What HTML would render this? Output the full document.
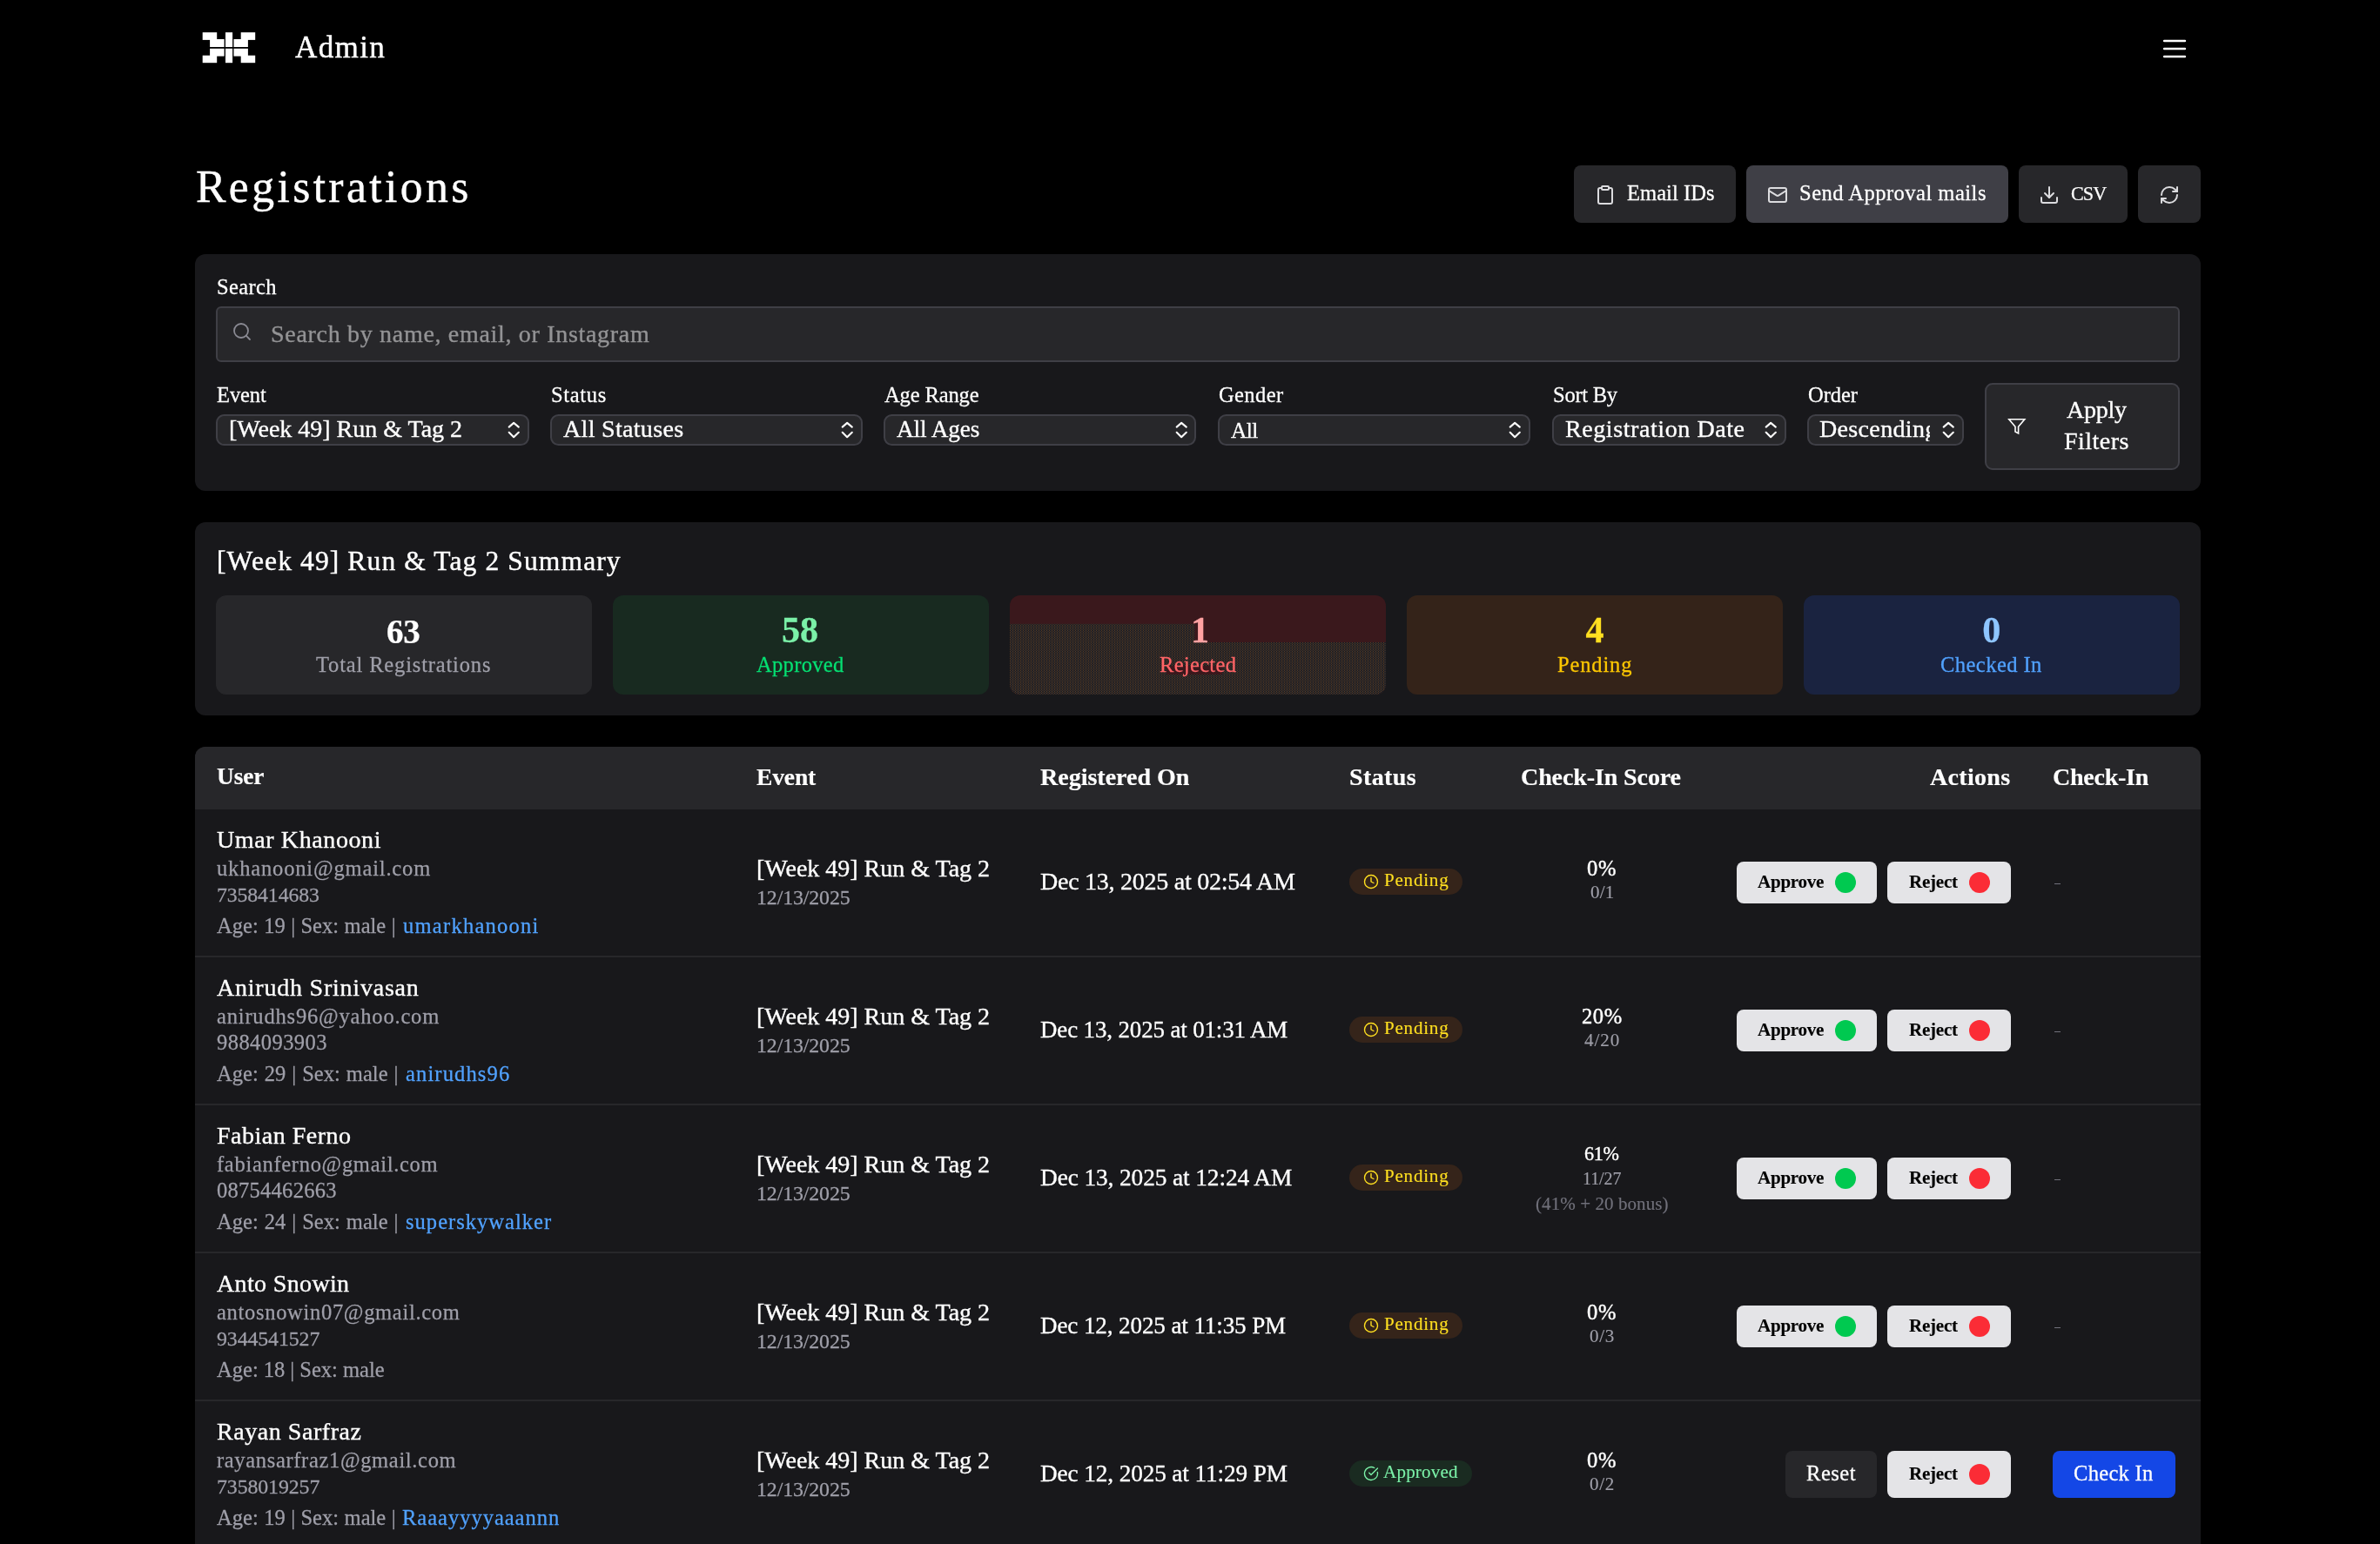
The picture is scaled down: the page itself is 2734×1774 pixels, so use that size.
<!DOCTYPE html>
<html lang="en"><head><meta charset="utf-8"><title>Admin - Registrations</title>
<style>
html,body{margin:0;padding:0;background:#000;}
html{width:2734px;height:1774px;overflow:hidden;}
body{width:2734px;height:1774px;position:relative;overflow:hidden;font-family:"Liberation Serif",serif;color:#fff;}
.b{position:absolute;display:block}
.t{position:absolute;white-space:nowrap;line-height:1;display:block;will-change:transform}
</style></head><body>

<svg class="b" style="left:0;top:0" width="320" height="100" viewBox="0 0 320 100" fill="#fff"><rect x="232.7" y="37.2" width="16.50" height="8.70"/><rect x="241.1" y="45.0" width="16.50" height="9.00"/><rect x="259.0" y="37.2" width="8.10" height="16.80"/><rect x="268.5" y="45.0" width="16.40" height="9.00"/><rect x="276.7" y="37.2" width="16.50" height="8.70"/><rect x="241.1" y="55.8" width="16.50" height="8.80"/><rect x="232.7" y="63.7" width="16.50" height="8.50"/><rect x="259.0" y="55.8" width="8.10" height="16.40"/><rect x="268.5" y="55.8" width="16.40" height="8.80"/><rect x="276.7" y="63.7" width="16.50" height="8.50"/></svg>
<svg class="b" style="left:2470.00px;top:30.00px" width="60" height="50" viewBox="0 0 60 50" fill="none" stroke="#fff" stroke-width="2.6" stroke-linecap="round" stroke-linejoin="round" ><path d="M16.2 17H39.9M16.2 26H39.9M16.2 35H39.9"/></svg>
<div class="b" style="left:1808.00px;top:190.00px;width:186.00px;height:66.00px;background:#27272a;border-radius:8px;"></div>
<div class="b" style="left:2006.00px;top:190.00px;width:301.00px;height:66.00px;background:#3f3f46;border-radius:8px;"></div>
<div class="b" style="left:2319.00px;top:190.00px;width:125.00px;height:66.00px;background:#27272a;border-radius:8px;"></div>
<div class="b" style="left:2456.00px;top:190.00px;width:72.00px;height:66.00px;background:#27272a;border-radius:8px;"></div>
<svg class="b" style="left:1832.00px;top:212.00px" width="24" height="24" viewBox="0 0 24 24" fill="none" stroke="#dcdcdf" stroke-width="2" stroke-linecap="round" stroke-linejoin="round" ><rect x="8" y="2" width="8" height="4" rx="1" ry="1"/><path d="M16 4h2a2 2 0 0 1 2 2v14a2 2 0 0 1-2 2H6a2 2 0 0 1-2-2V6a2 2 0 0 1 2-2h2"/></svg>
<svg class="b" style="left:2030.00px;top:212.00px" width="24" height="24" viewBox="0 0 24 24" fill="none" stroke="#dcdcdf" stroke-width="2" stroke-linecap="round" stroke-linejoin="round" ><rect width="20" height="16" x="2" y="4" rx="2"/><path d="m22 7-8.97 5.7a1.94 1.94 0 0 1-2.06 0L2 7"/></svg>
<svg class="b" style="left:2342.00px;top:212.00px" width="24" height="24" viewBox="0 0 24 24" fill="none" stroke="#dcdcdf" stroke-width="2" stroke-linecap="round" stroke-linejoin="round" ><path d="M21 15v4a2 2 0 0 1-2 2H5a2 2 0 0 1-2-2v-4"/><polyline points="7 10 12 15 17 10"/><line x1="12" x2="12" y1="15" y2="3"/></svg>
<svg class="b" style="left:2480.00px;top:212.00px" width="24" height="24" viewBox="0 0 24 24" fill="none" stroke="#dcdcdf" stroke-width="2" stroke-linecap="round" stroke-linejoin="round" ><path d="M3 12a9 9 0 0 1 9-9 9.75 9.75 0 0 1 6.74 2.74L21 8"/><path d="M21 3v5h-5"/><path d="M21 12a9 9 0 0 1-9 9 9.75 9.75 0 0 1-6.74-2.74L3 16"/><path d="M8 16H3v5"/></svg>
<div class="b" style="left:224.00px;top:292.00px;width:2304.00px;height:272.00px;background:#18181b;border-radius:12px;"></div>
<div class="b" style="left:248.00px;top:352.00px;width:2256.00px;height:64.00px;background:#27272a;border-radius:6px;border:2px solid #3f3f46;box-sizing:border-box;"></div>
<svg class="b" style="left:266.00px;top:368.50px" width="24" height="24" viewBox="0 0 24 24" fill="none" stroke="#8a8a93" stroke-width="1.8" stroke-linecap="round" stroke-linejoin="round" ><circle cx="11" cy="11" r="8"/><path d="m21 21-4.3-4.3"/></svg>
<div class="b" style="left:248.00px;top:476.00px;width:359.70px;height:36.00px;background:#27272a;border-radius:9.5px;border:2px solid #3f3f46;box-sizing:border-box;"></div>
<svg class="b" style="left:580.10px;top:480.00px" width="20" height="28" viewBox="0 0 20 28" fill="none" stroke="#fff" stroke-width="2.1" stroke-linecap="round" stroke-linejoin="round" ><path d="M4.7 10.6 L10.15 5.9 L15.8 10.6M4.7 16.8 L10.15 22.2 L15.8 16.8"/></svg>
<div class="b" style="left:631.70px;top:476.00px;width:359.10px;height:36.00px;background:#27272a;border-radius:9.5px;border:2px solid #3f3f46;box-sizing:border-box;"></div>
<svg class="b" style="left:963.20px;top:480.00px" width="20" height="28" viewBox="0 0 20 28" fill="none" stroke="#fff" stroke-width="2.1" stroke-linecap="round" stroke-linejoin="round" ><path d="M4.7 10.6 L10.15 5.9 L15.8 10.6M4.7 16.8 L10.15 22.2 L15.8 16.8"/></svg>
<div class="b" style="left:1015.00px;top:476.00px;width:359.40px;height:36.00px;background:#27272a;border-radius:9.5px;border:2px solid #3f3f46;box-sizing:border-box;"></div>
<svg class="b" style="left:1346.80px;top:480.00px" width="20" height="28" viewBox="0 0 20 28" fill="none" stroke="#fff" stroke-width="2.1" stroke-linecap="round" stroke-linejoin="round" ><path d="M4.7 10.6 L10.15 5.9 L15.8 10.6M4.7 16.8 L10.15 22.2 L15.8 16.8"/></svg>
<div class="b" style="left:1398.80px;top:476.00px;width:358.80px;height:36.00px;background:#27272a;border-radius:9.5px;border:2px solid #3f3f46;box-sizing:border-box;"></div>
<svg class="b" style="left:1730.00px;top:480.00px" width="20" height="28" viewBox="0 0 20 28" fill="none" stroke="#fff" stroke-width="2.1" stroke-linecap="round" stroke-linejoin="round" ><path d="M4.7 10.6 L10.15 5.9 L15.8 10.6M4.7 16.8 L10.15 22.2 L15.8 16.8"/></svg>
<div class="b" style="left:1782.60px;top:476.00px;width:269.00px;height:36.00px;background:#27272a;border-radius:9.5px;border:2px solid #3f3f46;box-sizing:border-box;"></div>
<svg class="b" style="left:2024.00px;top:480.00px" width="20" height="28" viewBox="0 0 20 28" fill="none" stroke="#fff" stroke-width="2.1" stroke-linecap="round" stroke-linejoin="round" ><path d="M4.7 10.6 L10.15 5.9 L15.8 10.6M4.7 16.8 L10.15 22.2 L15.8 16.8"/></svg>
<div class="b" style="left:2076.00px;top:476.00px;width:180.00px;height:36.00px;background:#27272a;border-radius:9.5px;border:2px solid #3f3f46;box-sizing:border-box;"></div>
<svg class="b" style="left:2228.40px;top:480.00px" width="20" height="28" viewBox="0 0 20 28" fill="none" stroke="#fff" stroke-width="2.1" stroke-linecap="round" stroke-linejoin="round" ><path d="M4.7 10.6 L10.15 5.9 L15.8 10.6M4.7 16.8 L10.15 22.2 L15.8 16.8"/></svg>
<div class="b" style="left:2280.00px;top:440.00px;width:224.00px;height:100.00px;background:#27272a;border-radius:9px;border:2px solid #3f3f46;box-sizing:border-box;"></div>
<svg class="b" style="left:2306.20px;top:479.20px" width="21.6" height="21.6" viewBox="0 0 24 24" fill="none" stroke="#fff" stroke-width="1.8" stroke-linecap="round" stroke-linejoin="miter" ><polygon points="22 3 2 3 10 12.46 10 19 14 21 14 12.46 22 3"/></svg>
<div class="b" style="left:224.00px;top:600.00px;width:2304.00px;height:222.00px;background:#18181b;border-radius:12px;"></div>
<div class="b" style="left:248.00px;top:684.00px;width:432.00px;height:114.00px;background:#27272a;border-radius:12px;"></div>
<div class="b" style="left:704.00px;top:684.00px;width:432.00px;height:114.00px;background:#182a20;border-radius:12px;"></div>
<div class="b" style="left:1160px;top:684px;width:432px;height:114.00px;background:#3a181c;border-radius:12px;overflow:hidden"><svg width="432" height="114" style="position:absolute;left:0;top:0"><defs><pattern id="dz" width="3" height="2" patternUnits="userSpaceOnUse"><rect width="3" height="2" fill="#181d28"/><rect width="1" height="1" fill="#5e3c1d"/><rect x="1.5" y="1" width="1" height="1" fill="#5e3c1d"/></pattern></defs><rect x="0" y="32.8" width="212.3" height="30" fill="url(#dz)"/><rect x="0" y="54.0" width="432" height="70" fill="url(#dz)"/><rect x="180" y="81.0" width="64" height="10" fill="#3a181c"/></svg></div>
<div class="b" style="left:1616.00px;top:684.00px;width:432.00px;height:114.00px;background:#342319;border-radius:12px;"></div>
<div class="b" style="left:2072.00px;top:684.00px;width:432.00px;height:114.00px;background:#1a2340;border-radius:12px;"></div>
<div class="b" style="left:224px;top:858px;width:2304px;height:916px;background:#18181b;border-radius:12px 12px 0 0;overflow:hidden"><div style="height:71.5px;background:#27272a"></div></div>
<div class="b" style="left:1550.00px;top:998.00px;width:130.00px;height:30.00px;background:#35241a;border-radius:15px;"></div>
<svg class="b" style="left:1565.80px;top:1004.00px" width="18" height="18" viewBox="0 0 24 24" fill="none" stroke="#ffdf20" stroke-width="1.85" stroke-linecap="round" stroke-linejoin="round" ><circle cx="12" cy="12" r="10"/><polyline points="12 6 12 12 16 14"/></svg>
<div class="b" style="left:1995.00px;top:990.00px;width:160.70px;height:48.00px;background:#e4e4e7;border-radius:8px;"></div>
<div class="b" style="left:2108.00px;top:1002.00px;width:24.00px;height:24.00px;background:#00c950;border-radius:12px;"></div>
<div class="b" style="left:2168.00px;top:990.00px;width:141.80px;height:48.00px;background:#e4e4e7;border-radius:8px;"></div>
<div class="b" style="left:2262.00px;top:1002.00px;width:24.00px;height:24.00px;background:#fb2c36;border-radius:12px;"></div>
<div class="b" style="left:2359.50px;top:1014.60px;width:7.80px;height:1.80px;background:#71717b;"></div>
<div class="b" style="left:224.00px;top:1098.00px;width:2304.00px;height:2.00px;background:#27272a;"></div>
<div class="b" style="left:1550.00px;top:1168.00px;width:130.00px;height:30.00px;background:#35241a;border-radius:15px;"></div>
<svg class="b" style="left:1565.80px;top:1174.00px" width="18" height="18" viewBox="0 0 24 24" fill="none" stroke="#ffdf20" stroke-width="1.85" stroke-linecap="round" stroke-linejoin="round" ><circle cx="12" cy="12" r="10"/><polyline points="12 6 12 12 16 14"/></svg>
<div class="b" style="left:1995.00px;top:1160.00px;width:160.70px;height:48.00px;background:#e4e4e7;border-radius:8px;"></div>
<div class="b" style="left:2108.00px;top:1172.00px;width:24.00px;height:24.00px;background:#00c950;border-radius:12px;"></div>
<div class="b" style="left:2168.00px;top:1160.00px;width:141.80px;height:48.00px;background:#e4e4e7;border-radius:8px;"></div>
<div class="b" style="left:2262.00px;top:1172.00px;width:24.00px;height:24.00px;background:#fb2c36;border-radius:12px;"></div>
<div class="b" style="left:2359.50px;top:1184.60px;width:7.80px;height:1.80px;background:#71717b;"></div>
<div class="b" style="left:224.00px;top:1268.00px;width:2304.00px;height:2.00px;background:#27272a;"></div>
<div class="b" style="left:1550.00px;top:1338.00px;width:130.00px;height:30.00px;background:#35241a;border-radius:15px;"></div>
<svg class="b" style="left:1565.80px;top:1344.00px" width="18" height="18" viewBox="0 0 24 24" fill="none" stroke="#ffdf20" stroke-width="1.85" stroke-linecap="round" stroke-linejoin="round" ><circle cx="12" cy="12" r="10"/><polyline points="12 6 12 12 16 14"/></svg>
<div class="b" style="left:1995.00px;top:1330.00px;width:160.70px;height:48.00px;background:#e4e4e7;border-radius:8px;"></div>
<div class="b" style="left:2108.00px;top:1342.00px;width:24.00px;height:24.00px;background:#00c950;border-radius:12px;"></div>
<div class="b" style="left:2168.00px;top:1330.00px;width:141.80px;height:48.00px;background:#e4e4e7;border-radius:8px;"></div>
<div class="b" style="left:2262.00px;top:1342.00px;width:24.00px;height:24.00px;background:#fb2c36;border-radius:12px;"></div>
<div class="b" style="left:2359.50px;top:1354.60px;width:7.80px;height:1.80px;background:#71717b;"></div>
<div class="b" style="left:224.00px;top:1438.00px;width:2304.00px;height:2.00px;background:#27272a;"></div>
<div class="b" style="left:1550.00px;top:1508.00px;width:130.00px;height:30.00px;background:#35241a;border-radius:15px;"></div>
<svg class="b" style="left:1565.80px;top:1514.00px" width="18" height="18" viewBox="0 0 24 24" fill="none" stroke="#ffdf20" stroke-width="1.85" stroke-linecap="round" stroke-linejoin="round" ><circle cx="12" cy="12" r="10"/><polyline points="12 6 12 12 16 14"/></svg>
<div class="b" style="left:1995.00px;top:1500.00px;width:160.70px;height:48.00px;background:#e4e4e7;border-radius:8px;"></div>
<div class="b" style="left:2108.00px;top:1512.00px;width:24.00px;height:24.00px;background:#00c950;border-radius:12px;"></div>
<div class="b" style="left:2168.00px;top:1500.00px;width:141.80px;height:48.00px;background:#e4e4e7;border-radius:8px;"></div>
<div class="b" style="left:2262.00px;top:1512.00px;width:24.00px;height:24.00px;background:#fb2c36;border-radius:12px;"></div>
<div class="b" style="left:2359.50px;top:1524.60px;width:7.80px;height:1.80px;background:#71717b;"></div>
<div class="b" style="left:224.00px;top:1608.00px;width:2304.00px;height:2.00px;background:#27272a;"></div>
<div class="b" style="left:1550.00px;top:1678.00px;width:140.70px;height:30.00px;background:#1a2b21;border-radius:15px;"></div>
<svg class="b" style="left:1565.80px;top:1684.00px" width="18" height="18" viewBox="0 0 24 24" fill="none" stroke="#7bf1a8" stroke-width="1.8" stroke-linecap="round" stroke-linejoin="round" ><path d="M21.8 10A10 10 0 1 1 17 3.34"/><path d="m9 11 3 3L22 4"/></svg>
<div class="b" style="left:2051.00px;top:1667.00px;width:105.00px;height:54.00px;background:#27272a;border-radius:8px;"></div>
<div class="b" style="left:2168.00px;top:1667.00px;width:141.80px;height:54.00px;background:#e4e4e7;border-radius:8px;"></div>
<div class="b" style="left:2262.00px;top:1682.00px;width:24.00px;height:24.00px;background:#fb2c36;border-radius:12px;"></div>
<div class="b" style="left:2358.30px;top:1667.00px;width:140.50px;height:54.00px;background:#1447e6;border-radius:8px;"></div>


<span class="t" id="t0" style="left:338.50px;top:37.00px;font-size:35.10px;color:#fff;-webkit-text-stroke:0.013em currentColor;letter-spacing:1.344px;">Admin</span>
<span class="t" id="t1" style="left:225.20px;top:189.06px;font-size:51.75px;color:#fff;-webkit-text-stroke:0.008em currentColor;letter-spacing:3.351px;">Registrations</span>
<span class="t" id="t2" style="left:1868.70px;top:210.22px;font-size:24.57px;color:#fff;-webkit-text-stroke:0.011em currentColor;letter-spacing:0.026px;">Email IDs</span>
<span class="t" id="t3" style="left:2066.60px;top:210.22px;font-size:24.57px;color:#fff;-webkit-text-stroke:0.011em currentColor;letter-spacing:0.468px;">Send Approval mails</span>
<span class="t" id="t4" style="left:2378.70px;top:212.28px;font-size:22.11px;color:#fff;-webkit-text-stroke:0.011em currentColor;letter-spacing:-0.886px;">CSV</span>
<span class="t" id="t5" style="left:249.00px;top:318.02px;font-size:24.57px;color:#fff;-webkit-text-stroke:0.011em currentColor;letter-spacing:0.359px;">Search</span>
<span class="t" id="t6" style="left:310.90px;top:370.08px;font-size:28.08px;color:#939395;-webkit-text-stroke:0.012em currentColor;letter-spacing:0.656px;">Search by name, email, or Instagram</span>
<span class="t" id="t7" style="left:249.00px;top:442.22px;font-size:24.57px;color:#fff;-webkit-text-stroke:0.011em currentColor;letter-spacing:-0.110px;">Event</span>
<span class="t" id="t8" style="left:263.00px;top:479.28px;font-size:28.08px;color:#fff;-webkit-text-stroke:0.012em currentColor;letter-spacing:-0.042px;">[Week 49] Run &amp; Tag 2</span>
<span class="t" id="t9" style="left:632.70px;top:442.22px;font-size:24.57px;color:#fff;-webkit-text-stroke:0.011em currentColor;letter-spacing:0.661px;">Status</span>
<span class="t" id="t10" style="left:646.70px;top:479.28px;font-size:28.08px;color:#fff;-webkit-text-stroke:0.012em currentColor;letter-spacing:0.284px;">All Statuses</span>
<span class="t" id="t11" style="left:1016.00px;top:442.22px;font-size:24.57px;color:#fff;-webkit-text-stroke:0.011em currentColor;letter-spacing:-0.154px;">Age Range</span>
<span class="t" id="t12" style="left:1030.00px;top:479.97px;font-size:27.25px;color:#fff;-webkit-text-stroke:0.012em currentColor;letter-spacing:-0.125px;">All Ages</span>
<span class="t" id="t13" style="left:1399.80px;top:442.22px;font-size:24.57px;color:#fff;-webkit-text-stroke:0.011em currentColor;letter-spacing:0.364px;">Gender</span>
<span class="t" id="t14" style="left:1413.80px;top:481.63px;font-size:25.27px;color:#fff;-webkit-text-stroke:0.012em currentColor;letter-spacing:-0.479px;">All</span>
<span class="t" id="t15" style="left:1783.60px;top:442.22px;font-size:24.57px;color:#fff;-webkit-text-stroke:0.011em currentColor;letter-spacing:-0.272px;">Sort By</span>
<span class="t" id="t16" style="left:1797.60px;top:479.28px;font-size:28.08px;color:#fff;-webkit-text-stroke:0.012em currentColor;letter-spacing:0.547px;">Registration Date</span>
<span class="t" id="t17" style="left:2077.00px;top:442.22px;font-size:24.57px;color:#fff;-webkit-text-stroke:0.011em currentColor;letter-spacing:-0.062px;">Order</span>
<span class="t" id="t18" style="left:2090.20px;top:479.28px;font-size:28.08px;color:#fff;-webkit-text-stroke:0.012em currentColor;letter-spacing:0.309px;width:127.40px;overflow:hidden;">Descending</span>
<span class="t" id="t19" style="left:2373.60px;top:457.48px;font-size:28.08px;color:#fff;-webkit-text-stroke:0.012em currentColor;letter-spacing:-0.290px;">Apply</span>
<span class="t" id="t20" style="left:2371.30px;top:493.48px;font-size:28.08px;color:#fff;-webkit-text-stroke:0.012em currentColor;letter-spacing:0.436px;">Filters</span>
<span class="t" id="t21" style="left:249.20px;top:629.34px;font-size:31.59px;color:#fff;-webkit-text-stroke:0.013em currentColor;letter-spacing:1.088px;">[Week 49] Run &amp; Tag 2 Summary</span>
<span class="t" id="t22" style="left:443.70px;top:705.96px;font-size:39.10px;color:#fff;font-weight:700;-webkit-text-stroke:0.006em currentColor;letter-spacing:-0.252px;">63</span>
<span class="t" id="t23" style="left:363.00px;top:752.12px;font-size:24.57px;color:#9f9fa9;-webkit-text-stroke:0.011em currentColor;letter-spacing:0.811px;">Total Registrations</span>
<span class="t" id="t24" style="left:898.30px;top:703.42px;font-size:42.12px;color:#7bf1a8;font-weight:700;-webkit-text-stroke:0.006em currentColor;letter-spacing:-0.073px;">58</span>
<span class="t" id="t25" style="left:869.30px;top:752.12px;font-size:24.57px;color:#05df72;-webkit-text-stroke:0.011em currentColor;letter-spacing:0.289px;">Approved</span>
<span class="t" id="t26" style="left:1368.20px;top:703.42px;font-size:42.12px;color:#ffa2a2;font-weight:700;-webkit-text-stroke:0.006em currentColor;width:15.20px;text-align:center;overflow:visible;">1</span>
<span class="t" id="t27" style="left:1331.90px;top:752.12px;font-size:24.57px;color:#ff6467;-webkit-text-stroke:0.011em currentColor;letter-spacing:0.290px;">Rejected</span>
<span class="t" id="t28" style="left:1820.80px;top:703.42px;font-size:42.12px;color:#ffdf20;font-weight:700;-webkit-text-stroke:0.006em currentColor;width:22.20px;text-align:center;overflow:visible;">4</span>
<span class="t" id="t29" style="left:1788.60px;top:752.12px;font-size:24.57px;color:#fdc700;-webkit-text-stroke:0.011em currentColor;letter-spacing:0.828px;">Pending</span>
<span class="t" id="t30" style="left:2276.60px;top:703.42px;font-size:42.12px;color:#8ec5ff;font-weight:700;-webkit-text-stroke:0.006em currentColor;width:21.40px;text-align:center;overflow:visible;">0</span>
<span class="t" id="t31" style="left:2228.60px;top:752.12px;font-size:24.57px;color:#51a2ff;-webkit-text-stroke:0.011em currentColor;letter-spacing:0.427px;">Checked In</span>
<span class="t" id="t32" style="left:248.50px;top:879.48px;font-size:27.48px;color:#fff;font-weight:700;-webkit-text-stroke:0.006em currentColor;letter-spacing:-0.149px;">User</span>
<span class="t" id="t33" style="left:868.70px;top:879.43px;font-size:27.55px;color:#fff;font-weight:700;-webkit-text-stroke:0.006em currentColor;letter-spacing:-0.150px;">Event</span>
<span class="t" id="t34" style="left:1195.40px;top:878.98px;font-size:28.08px;color:#fff;font-weight:700;-webkit-text-stroke:0.006em currentColor;letter-spacing:-0.034px;">Registered On</span>
<span class="t" id="t35" style="left:1550.00px;top:878.98px;font-size:28.08px;color:#fff;font-weight:700;-webkit-text-stroke:0.006em currentColor;letter-spacing:0.344px;">Status</span>
<span class="t" id="t36" style="left:1747.10px;top:878.98px;font-size:28.08px;color:#fff;font-weight:700;-webkit-text-stroke:0.006em currentColor;letter-spacing:-0.140px;">Check-In Score</span>
<span class="t" id="t37" style="left:2216.70px;top:878.98px;font-size:28.08px;color:#fff;font-weight:700;-webkit-text-stroke:0.006em currentColor;letter-spacing:0.279px;">Actions</span>
<span class="t" id="t38" style="left:2357.60px;top:878.98px;font-size:28.08px;color:#fff;font-weight:700;-webkit-text-stroke:0.006em currentColor;letter-spacing:-0.297px;">Check-In</span>
<span class="t" id="t39" style="left:248.50px;top:950.78px;font-size:28.08px;color:#fff;-webkit-text-stroke:0.012em currentColor;letter-spacing:0.569px;">Umar Khanooni</span>
<span class="t" id="t40" style="left:248.50px;top:985.92px;font-size:24.57px;color:#9f9fa9;-webkit-text-stroke:0.011em currentColor;letter-spacing:0.811px;">ukhanooni@gmail.com</span>
<span class="t" id="t41" style="left:248.50px;top:1016.77px;font-size:23.80px;color:#9f9fa9;-webkit-text-stroke:0.011em currentColor;letter-spacing:-0.125px;">7358414683</span>
<span class="t" id="t42" style="left:248.50px;top:1051.72px;font-size:24.57px;color:#9f9fa9;-webkit-text-stroke:0.011em currentColor;word-spacing:0.270px;">Age: 19 | Sex: male |</span>
<span class="t" id="t43" style="left:462.60px;top:1051.72px;font-size:24.57px;color:#51a2ff;-webkit-text-stroke:0.011em currentColor;letter-spacing:1.227px;">umarkhanooni</span>
<span class="t" id="t44" style="left:868.90px;top:984.28px;font-size:28.08px;color:#fff;-webkit-text-stroke:0.012em currentColor;letter-spacing:-0.042px;">[Week 49] Run &amp; Tag 2</span>
<span class="t" id="t45" style="left:868.90px;top:1020.12px;font-size:23.86px;color:#9f9fa9;-webkit-text-stroke:0.011em currentColor;letter-spacing:-0.116px;">12/13/2025</span>
<span class="t" id="t46" style="left:1195.40px;top:999.48px;font-size:28.08px;color:#fff;-webkit-text-stroke:0.012em currentColor;letter-spacing:-0.284px;">Dec 13, 2025 at 02:54 AM</span>
<span class="t" id="t47" style="left:1589.50px;top:1001.36px;font-size:21.06px;color:#ffdf20;-webkit-text-stroke:0.007em currentColor;letter-spacing:0.785px;">Pending</span>
<span class="t" id="t48" style="left:1823.30px;top:985.72px;font-size:24.57px;color:#fff;-webkit-text-stroke:0.017em currentColor;letter-spacing:0.833px;">0%</span>
<span class="t" id="t49" style="left:1827.00px;top:1014.96px;font-size:21.06px;color:#9f9fa9;-webkit-text-stroke:0.007em currentColor;letter-spacing:0.157px;">0/1</span>
<span class="t" id="t50" style="left:2019.20px;top:1003.16px;font-size:21.06px;color:#000;font-weight:700;-webkit-text-stroke:0.006em currentColor;letter-spacing:-0.257px;">Approve</span>
<span class="t" id="t51" style="left:2192.60px;top:1003.16px;font-size:21.06px;color:#000;font-weight:700;-webkit-text-stroke:0.006em currentColor;letter-spacing:-0.227px;">Reject</span>
<span class="t" id="t52" style="left:248.50px;top:1120.78px;font-size:28.08px;color:#fff;-webkit-text-stroke:0.012em currentColor;letter-spacing:0.745px;">Anirudh Srinivasan</span>
<span class="t" id="t53" style="left:248.50px;top:1155.92px;font-size:24.57px;color:#9f9fa9;-webkit-text-stroke:0.011em currentColor;letter-spacing:0.793px;">anirudhs96@yahoo.com</span>
<span class="t" id="t54" style="left:248.50px;top:1186.12px;font-size:24.57px;color:#9f9fa9;-webkit-text-stroke:0.011em currentColor;letter-spacing:0.409px;">9884093903</span>
<span class="t" id="t55" style="left:248.50px;top:1221.72px;font-size:24.57px;color:#9f9fa9;-webkit-text-stroke:0.011em currentColor;word-spacing:0.850px;">Age: 29 | Sex: male |</span>
<span class="t" id="t56" style="left:465.50px;top:1221.72px;font-size:24.57px;color:#51a2ff;-webkit-text-stroke:0.011em currentColor;letter-spacing:1.120px;">anirudhs96</span>
<span class="t" id="t57" style="left:868.90px;top:1154.28px;font-size:28.08px;color:#fff;-webkit-text-stroke:0.012em currentColor;letter-spacing:-0.042px;">[Week 49] Run &amp; Tag 2</span>
<span class="t" id="t58" style="left:868.90px;top:1190.12px;font-size:23.86px;color:#9f9fa9;-webkit-text-stroke:0.011em currentColor;letter-spacing:-0.116px;">12/13/2025</span>
<span class="t" id="t59" style="left:1195.40px;top:1170.46px;font-size:26.91px;color:#fff;-webkit-text-stroke:0.012em currentColor;letter-spacing:-0.118px;">Dec 13, 2025 at 01:31 AM</span>
<span class="t" id="t60" style="left:1589.50px;top:1171.36px;font-size:21.06px;color:#ffdf20;-webkit-text-stroke:0.007em currentColor;letter-spacing:0.785px;">Pending</span>
<span class="t" id="t61" style="left:1816.80px;top:1155.72px;font-size:24.57px;color:#fff;-webkit-text-stroke:0.017em currentColor;letter-spacing:0.548px;">20%</span>
<span class="t" id="t62" style="left:1819.60px;top:1184.96px;font-size:21.06px;color:#9f9fa9;-webkit-text-stroke:0.007em currentColor;letter-spacing:0.965px;">4/20</span>
<span class="t" id="t63" style="left:2019.20px;top:1173.16px;font-size:21.06px;color:#000;font-weight:700;-webkit-text-stroke:0.006em currentColor;letter-spacing:-0.257px;">Approve</span>
<span class="t" id="t64" style="left:2192.60px;top:1173.16px;font-size:21.06px;color:#000;font-weight:700;-webkit-text-stroke:0.006em currentColor;letter-spacing:-0.227px;">Reject</span>
<span class="t" id="t65" style="left:248.50px;top:1290.78px;font-size:28.08px;color:#fff;-webkit-text-stroke:0.012em currentColor;letter-spacing:0.474px;">Fabian Ferno</span>
<span class="t" id="t66" style="left:248.50px;top:1325.92px;font-size:24.57px;color:#9f9fa9;-webkit-text-stroke:0.011em currentColor;letter-spacing:0.674px;">fabianferno@gmail.com</span>
<span class="t" id="t67" style="left:248.50px;top:1356.12px;font-size:24.57px;color:#9f9fa9;-webkit-text-stroke:0.011em currentColor;letter-spacing:0.239px;">08754462663</span>
<span class="t" id="t68" style="left:248.50px;top:1391.72px;font-size:24.57px;color:#9f9fa9;-webkit-text-stroke:0.011em currentColor;word-spacing:0.850px;">Age: 24 | Sex: male |</span>
<span class="t" id="t69" style="left:465.50px;top:1391.72px;font-size:24.57px;color:#51a2ff;-webkit-text-stroke:0.011em currentColor;letter-spacing:1.003px;">superskywalker</span>
<span class="t" id="t70" style="left:868.90px;top:1324.28px;font-size:28.08px;color:#fff;-webkit-text-stroke:0.012em currentColor;letter-spacing:-0.042px;">[Week 49] Run &amp; Tag 2</span>
<span class="t" id="t71" style="left:868.90px;top:1360.12px;font-size:23.86px;color:#9f9fa9;-webkit-text-stroke:0.011em currentColor;letter-spacing:-0.116px;">12/13/2025</span>
<span class="t" id="t72" style="left:1195.40px;top:1340.06px;font-size:27.39px;color:#fff;-webkit-text-stroke:0.012em currentColor;letter-spacing:-0.118px;">Dec 13, 2025 at 12:24 AM</span>
<span class="t" id="t73" style="left:1589.50px;top:1341.36px;font-size:21.06px;color:#ffdf20;-webkit-text-stroke:0.007em currentColor;letter-spacing:0.785px;">Pending</span>
<span class="t" id="t74" style="left:1820.30px;top:1315.18px;font-size:22.11px;color:#fff;-webkit-text-stroke:0.017em currentColor;letter-spacing:-0.332px;">61%</span>
<span class="t" id="t75" style="left:1817.60px;top:1343.69px;font-size:20.07px;color:#9f9fa9;-webkit-text-stroke:0.007em currentColor;letter-spacing:-0.104px;">11/27</span>
<span class="t" id="t76" style="left:1764.20px;top:1372.86px;font-size:21.06px;color:#71717b;-webkit-text-stroke:0.007em currentColor;letter-spacing:0.065px;">(41% + 20 bonus)</span>
<span class="t" id="t77" style="left:2019.20px;top:1343.16px;font-size:21.06px;color:#000;font-weight:700;-webkit-text-stroke:0.006em currentColor;letter-spacing:-0.257px;">Approve</span>
<span class="t" id="t78" style="left:2192.60px;top:1343.16px;font-size:21.06px;color:#000;font-weight:700;-webkit-text-stroke:0.006em currentColor;letter-spacing:-0.227px;">Reject</span>
<span class="t" id="t79" style="left:248.50px;top:1460.78px;font-size:28.08px;color:#fff;-webkit-text-stroke:0.012em currentColor;letter-spacing:0.314px;">Anto Snowin</span>
<span class="t" id="t80" style="left:248.50px;top:1495.92px;font-size:24.57px;color:#9f9fa9;-webkit-text-stroke:0.011em currentColor;letter-spacing:0.669px;">antosnowin07@gmail.com</span>
<span class="t" id="t81" style="left:248.50px;top:1526.68px;font-size:23.90px;color:#9f9fa9;-webkit-text-stroke:0.011em currentColor;letter-spacing:-0.121px;">9344541527</span>
<span class="t" id="t82" style="left:248.50px;top:1561.72px;font-size:24.57px;color:#9f9fa9;-webkit-text-stroke:0.011em currentColor;word-spacing:-0.126px;">Age: 18 | Sex: male</span>
<span class="t" id="t83" style="left:868.90px;top:1494.28px;font-size:28.08px;color:#fff;-webkit-text-stroke:0.012em currentColor;letter-spacing:-0.042px;">[Week 49] Run &amp; Tag 2</span>
<span class="t" id="t84" style="left:868.90px;top:1530.12px;font-size:23.86px;color:#9f9fa9;-webkit-text-stroke:0.011em currentColor;letter-spacing:-0.116px;">12/13/2025</span>
<span class="t" id="t85" style="left:1195.40px;top:1510.31px;font-size:27.09px;color:#fff;-webkit-text-stroke:0.012em currentColor;letter-spacing:-0.115px;">Dec 12, 2025 at 11:35 PM</span>
<span class="t" id="t86" style="left:1589.50px;top:1511.36px;font-size:21.06px;color:#ffdf20;-webkit-text-stroke:0.007em currentColor;letter-spacing:0.785px;">Pending</span>
<span class="t" id="t87" style="left:1823.30px;top:1495.72px;font-size:24.57px;color:#fff;-webkit-text-stroke:0.017em currentColor;letter-spacing:0.833px;">0%</span>
<span class="t" id="t88" style="left:1826.00px;top:1524.96px;font-size:21.06px;color:#9f9fa9;-webkit-text-stroke:0.007em currentColor;letter-spacing:0.677px;">0/3</span>
<span class="t" id="t89" style="left:2019.20px;top:1513.16px;font-size:21.06px;color:#000;font-weight:700;-webkit-text-stroke:0.006em currentColor;letter-spacing:-0.257px;">Approve</span>
<span class="t" id="t90" style="left:2192.60px;top:1513.16px;font-size:21.06px;color:#000;font-weight:700;-webkit-text-stroke:0.006em currentColor;letter-spacing:-0.227px;">Reject</span>
<span class="t" id="t91" style="left:248.50px;top:1630.78px;font-size:28.08px;color:#fff;-webkit-text-stroke:0.012em currentColor;letter-spacing:0.511px;">Rayan Sarfraz</span>
<span class="t" id="t92" style="left:248.50px;top:1665.92px;font-size:24.57px;color:#9f9fa9;-webkit-text-stroke:0.011em currentColor;letter-spacing:0.639px;">rayansarfraz1@gmail.com</span>
<span class="t" id="t93" style="left:248.50px;top:1696.68px;font-size:23.90px;color:#9f9fa9;-webkit-text-stroke:0.011em currentColor;letter-spacing:-0.121px;">7358019257</span>
<span class="t" id="t94" style="left:248.50px;top:1731.72px;font-size:24.57px;color:#9f9fa9;-webkit-text-stroke:0.011em currentColor;word-spacing:0.270px;">Age: 19 | Sex: male |</span>
<span class="t" id="t95" style="left:462.20px;top:1731.72px;font-size:24.57px;color:#51a2ff;-webkit-text-stroke:0.011em currentColor;letter-spacing:0.958px;">Raaayyyyaaannn</span>
<span class="t" id="t96" style="left:868.90px;top:1664.28px;font-size:28.08px;color:#fff;-webkit-text-stroke:0.012em currentColor;letter-spacing:-0.042px;">[Week 49] Run &amp; Tag 2</span>
<span class="t" id="t97" style="left:868.90px;top:1700.12px;font-size:23.86px;color:#9f9fa9;-webkit-text-stroke:0.011em currentColor;letter-spacing:-0.116px;">12/13/2025</span>
<span class="t" id="t98" style="left:1195.40px;top:1680.17px;font-size:27.26px;color:#fff;-webkit-text-stroke:0.012em currentColor;letter-spacing:-0.115px;">Dec 12, 2025 at 11:29 PM</span>
<span class="t" id="t99" style="left:1589.30px;top:1681.36px;font-size:21.06px;color:#7bf1a8;-webkit-text-stroke:0.007em currentColor;letter-spacing:0.204px;">Approved</span>
<span class="t" id="t100" style="left:1823.30px;top:1665.72px;font-size:24.57px;color:#fff;-webkit-text-stroke:0.017em currentColor;letter-spacing:0.833px;">0%</span>
<span class="t" id="t101" style="left:1826.00px;top:1694.96px;font-size:21.06px;color:#9f9fa9;-webkit-text-stroke:0.007em currentColor;letter-spacing:0.677px;">0/2</span>
<span class="t" id="t102" style="left:2074.70px;top:1680.82px;font-size:24.57px;color:#fff;-webkit-text-stroke:0.011em currentColor;letter-spacing:0.494px;">Reset</span>
<span class="t" id="t103" style="left:2192.60px;top:1683.16px;font-size:21.06px;color:#000;font-weight:700;-webkit-text-stroke:0.006em currentColor;letter-spacing:-0.227px;">Reject</span>
<span class="t" id="t104" style="left:2382.30px;top:1680.82px;font-size:24.57px;color:#fff;-webkit-text-stroke:0.011em currentColor;letter-spacing:0.272px;">Check In</span>

</body></html>
